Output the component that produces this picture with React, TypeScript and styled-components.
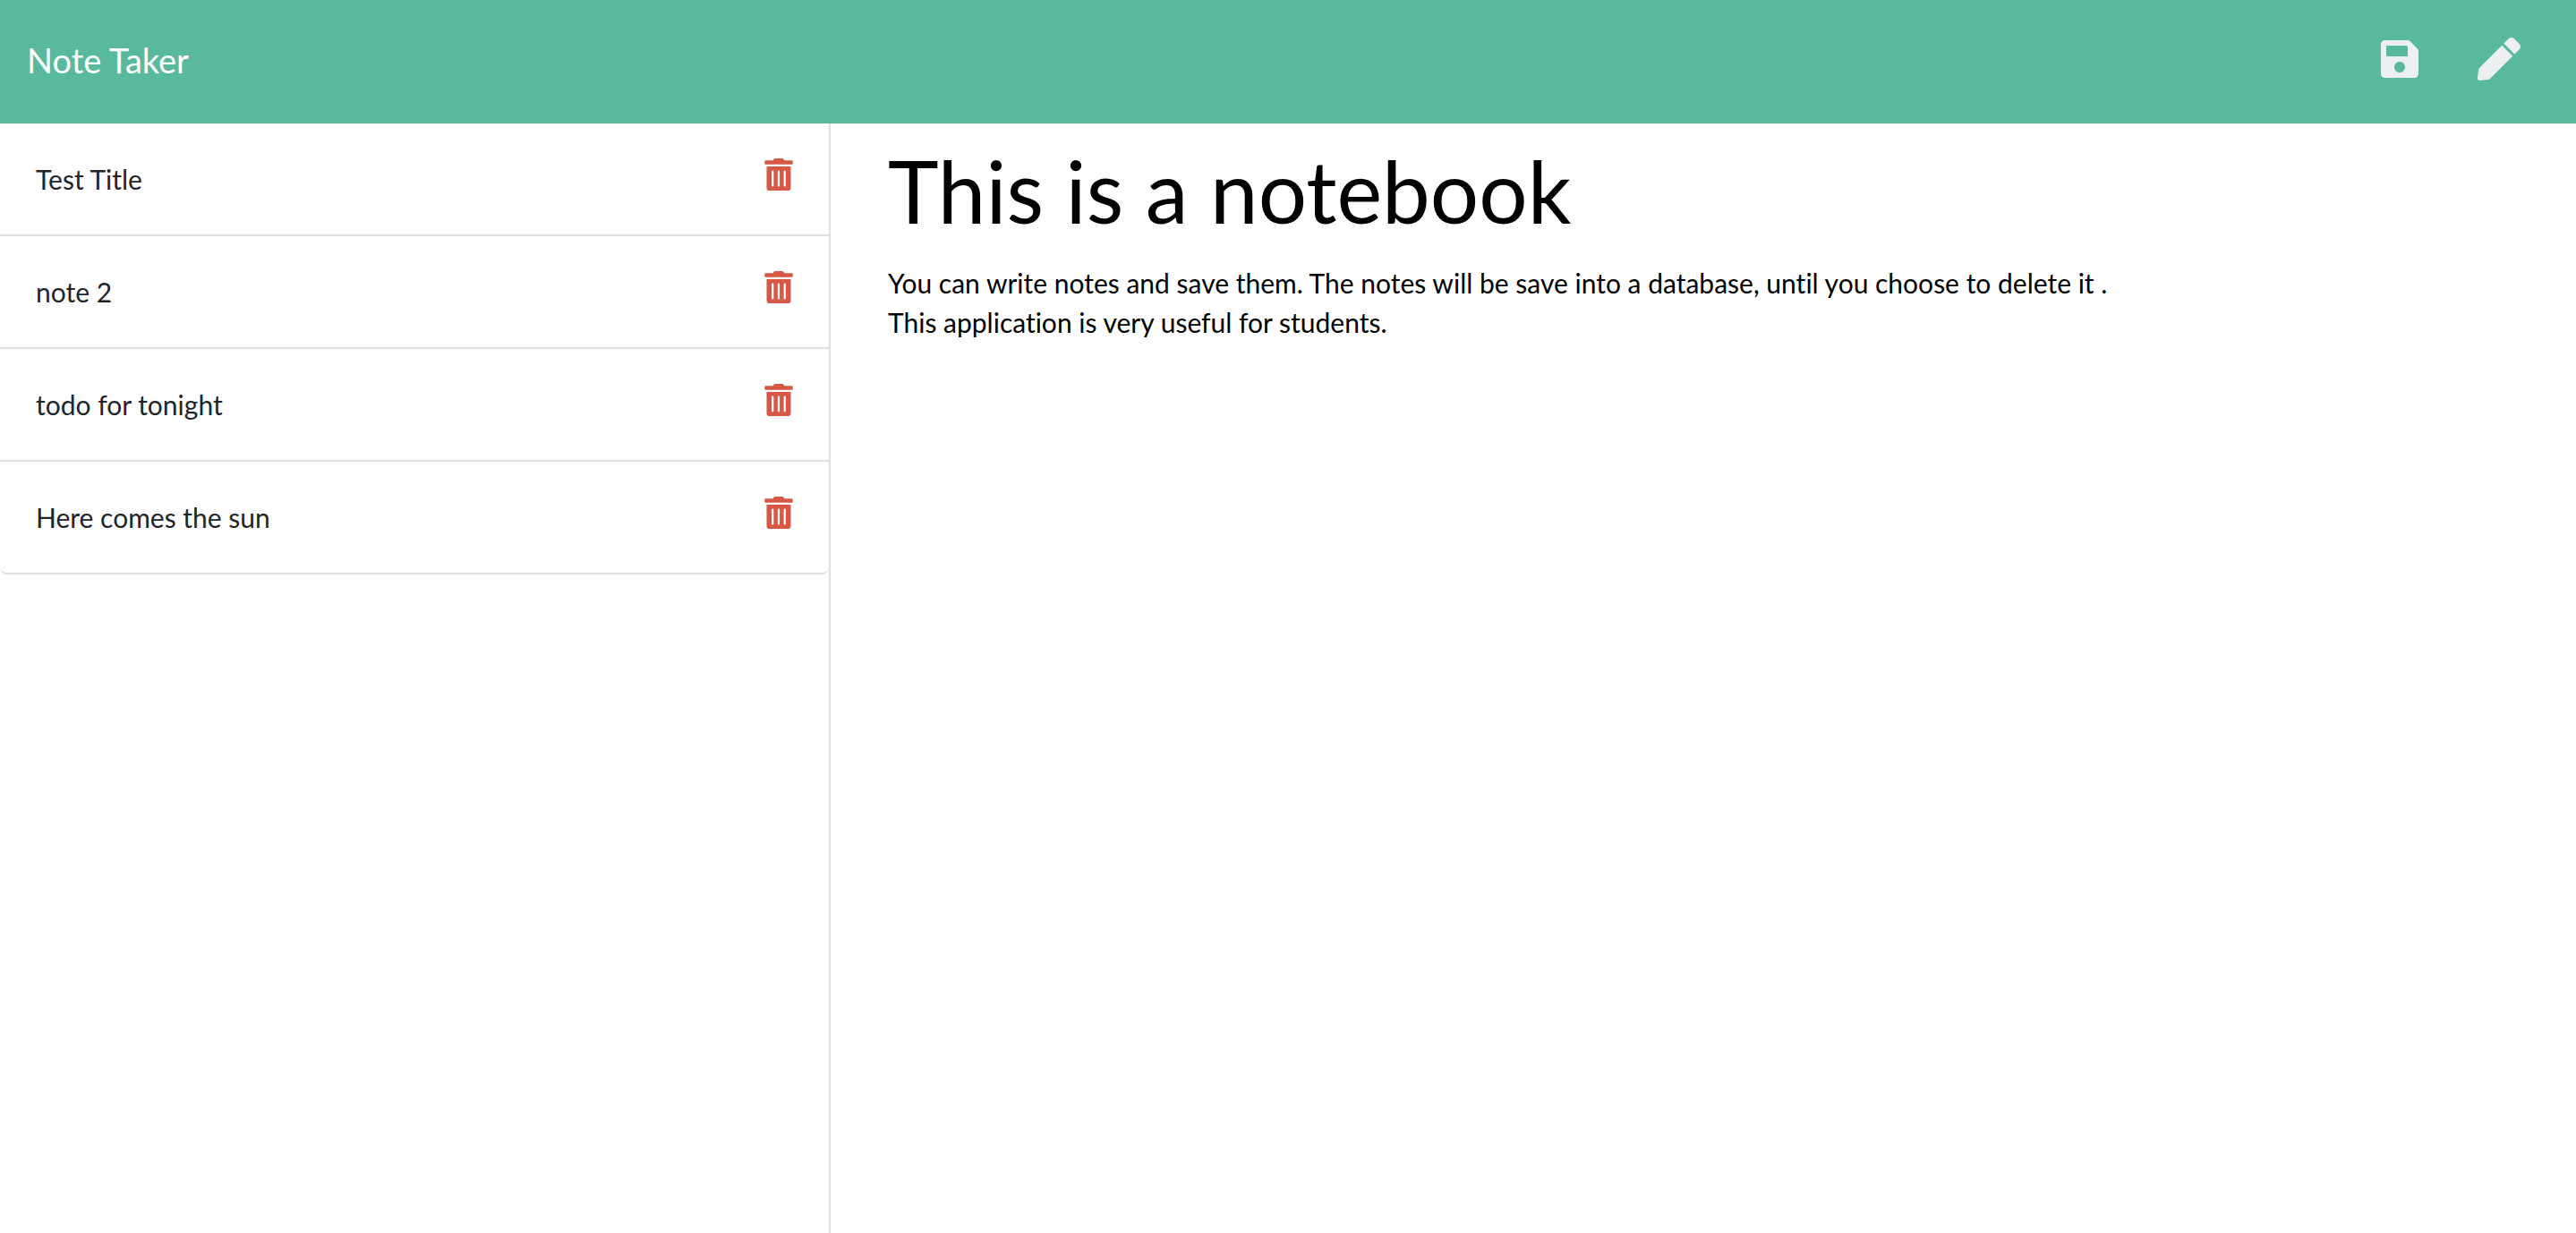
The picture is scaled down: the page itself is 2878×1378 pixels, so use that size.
import React, { useState } from "react";
import styled, { createGlobalStyle } from "styled-components";
import { FaSave, FaPen, FaTrashAlt } from "react-icons/fa";

const GlobalStyle = createGlobalStyle`
  *, *::before, *::after { box-sizing: border-box; }
  body {
    margin: 0;
    background: #ffffff;
    color: #212529;
    font-family: Lato, "Open Sans", sans-serif;
    font-size: 30px;
    line-height: 44px;
    font-variant-ligatures: none;
  }
`;

const Page = styled.div`
  display: flex;
  flex-direction: column;
  min-height: 100vh;
`;

const Navbar = styled.header`
  display: flex;
  align-items: flex-start;
  justify-content: space-between;
  padding: 42px 62px 46px 30px;
  background: #58b99e;
`;

const Brand = styled.a`
  color: #ffffff;
  font-size: 38px;
  line-height: 50px;
  text-decoration: none;
`;

const Actions = styled.div`
  display: flex;
  gap: 63px;
`;

const IconButton = styled.button<{ $color: string; $size: number }>`
  display: flex;
  padding: 0;
  border: 0;
  background: none;
  color: ${(p) => p.$color};
  font-size: ${(p) => p.$size}px;
  line-height: 1;
  cursor: pointer;

  svg {
    width: 1em;
    height: 1em;
  }
`;

const Columns = styled.div`
  display: flex;
  flex: 1;
`;

const Sidebar = styled.aside`
  flex: 0 0 calc((100% - 94px) / 3);
  border-right: 2px solid #dfdfdf;
`;

const NoteList = styled.ul`
  margin: 0;
  padding: 0;
  list-style: none;
`;

const NoteItem = styled.li`
  display: flex;
  align-items: flex-start;
  justify-content: space-between;
  padding: 39px 38px 39px 40px;
  border-bottom: 2px solid #dfdfdf;
  line-height: 46px;

  &:last-child {
    border-bottom-left-radius: 8px;
    border-bottom-right-radius: 8px;
  }
`;

const Content = styled.main`
  flex: 1;
  padding: 18px 64px;
  color: #000000;
`;

const Heading = styled.h1`
  margin: 0 0 24px;
  font-size: 96px;
  font-weight: 400;
  line-height: 114px;
`;

const Text = styled.p`
  margin: 0;
`;

const initialNotes = ["Test Title", "note 2", "todo for tonight", "Here comes the sun"];

export default function App() {
  const [notes, setNotes] = useState(initialNotes);

  return (
    <Page>
      <GlobalStyle />
      <Navbar>
        <Brand href="/">Note Taker</Brand>
        <Actions>
          <IconButton $color="#ecf0f1" $size={48} type="button" aria-label="Save note">
            <FaSave />
          </IconButton>
          <IconButton $color="#ecf0f1" $size={48} type="button" aria-label="New note">
            <FaPen />
          </IconButton>
        </Actions>
      </Navbar>
      <Columns>
        <Sidebar>
          <NoteList>
            {notes.map((note) => (
              <NoteItem key={note}>
                <span>{note}</span>
                <IconButton
                  $color="#d65845"
                  $size={36}
                  type="button"
                  aria-label={`Delete ${note}`}
                  onClick={() => setNotes(notes.filter((n) => n !== note))}
                >
                  <FaTrashAlt />
                </IconButton>
              </NoteItem>
            ))}
          </NoteList>
        </Sidebar>
        <Content>
          <Heading>This is a notebook</Heading>
          <Text>
            You can write notes and save them. The notes will be save into a database, until you choose to delete it .
            <br />
            This application is very useful for students.
          </Text>
        </Content>
      </Columns>
    </Page>
  );
}
